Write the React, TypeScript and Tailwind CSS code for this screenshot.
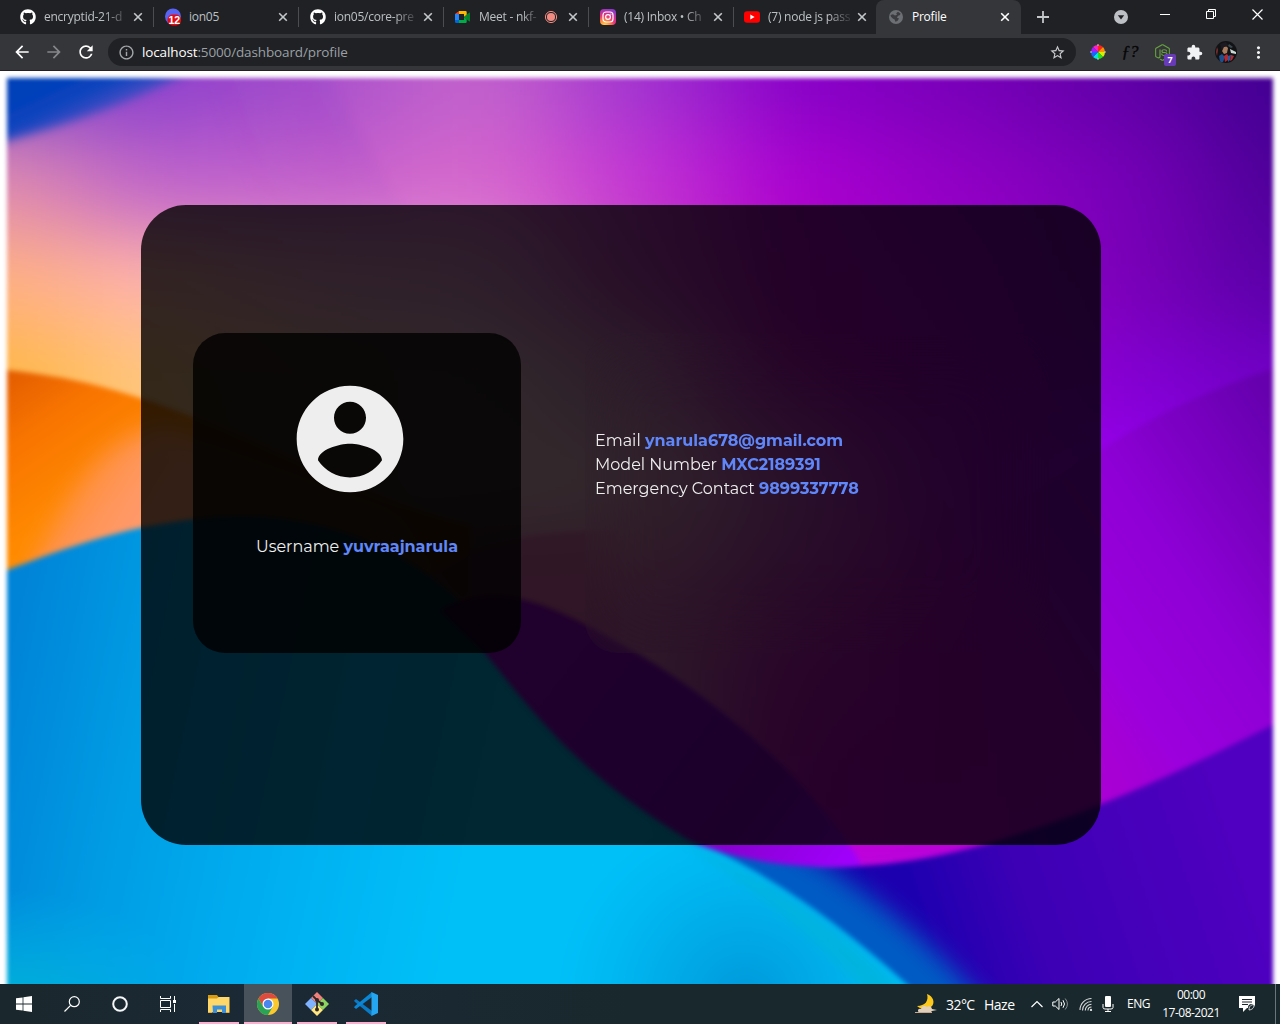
import type { ReactNode } from "react";
import { FaGithub, FaNodeJs } from "react-icons/fa";
import {
  MdArrowBack,
  MdArrowForward,
  MdExtension,
  MdMoreVert,
  MdOutlineInfo,
  MdRefresh,
  MdStarBorder,
} from "react-icons/md";

/* ---------- favicons ---------- */

const DiscordIcon = () => (
  <svg viewBox="0 0 16 16" className="h-4 w-4 overflow-visible">
    <circle cx="8" cy="7.5" r="8" fill="#5865f2" />
    <rect x="2.5" y="5.5" width="13.5" height="11" rx="5" fill="#e30b13" />
    <text x="9.3" y="14.6" textAnchor="middle" fontSize="10.5" fontWeight="700" fontFamily="Liberation Sans, sans-serif" fill="#fff">12</text>
  </svg>
);

const MeetIcon = () => (
  <svg viewBox="0 0 16 14" className="h-3.5 w-4">
    <path d="M0 4 4 1v3z" fill="#ea4335" />
    <path d="M4 1h6.5q1.2 0 1.2 1.2V6L9 7V4H4z" fill="#ffba00" />
    <path d="M0 4h4v6H0z" fill="#2684fc" />
    <path d="M0 10h4v3H1.2Q0 13 0 11.8z" fill="#0066da" />
    <path d="M4 10h5V7l2.7 2v2.8q0 1.2-1.2 1.2H4z" fill="#00ac47" />
    <path d="M9 7l5-4.2q1-.6 1 .5v7.4q0 1.1-1 .5z" fill="#00832d" />
    <path d="M11.7 4.8v4.4L9 7z" fill="#188038" />
  </svg>
);

const InstagramIcon = () => (
  <svg viewBox="0 0 16 16" className="h-4 w-4">
    <defs>
      <radialGradient id="ig" cx="0.28" cy="1.05" r="1.1">
        <stop offset="0" stopColor="#ffdd55" />
        <stop offset="0.3" stopColor="#ff8a3c" />
        <stop offset="0.6" stopColor="#e8307a" />
        <stop offset="1" stopColor="#8a3ac8" />
      </radialGradient>
    </defs>
    <rect width="16" height="16" rx="4" fill="url(#ig)" />
    <rect x="3" y="3" width="10" height="10" rx="3" fill="none" stroke="#fff" strokeWidth="1.2" />
    <circle cx="8" cy="8" r="2.4" fill="none" stroke="#fff" strokeWidth="1.2" />
    <circle cx="10.9" cy="5.1" r="0.7" fill="#fff" />
  </svg>
);

const YoutubeIcon = () => (
  <svg viewBox="0 0 16 16" className="h-4 w-4">
    <rect y="2.3" width="16" height="11.4" rx="3" fill="#f00" />
    <path d="M6.3 5.5v5l4.3-2.5z" fill="#fff" />
  </svg>
);

const GlobeIcon = () => (
  <svg viewBox="0 0 16 16" className="h-4 w-4">
    <circle cx="8" cy="8" r="7" fill="#6c6f74" />
    <path d="M2.500 6 5 5.200 7 6.500 9 5.800 8.200 4.200 10 2.800 12.500 4.500 12 6 10.200 6.800 8.800 8.600 11 9.600 9.400 12 7.400 12.800 6.600 10.400 4.800 9.600 3 7.800z" fill="#3b3c40" />
  </svg>
);

/* ---------- browser chrome ---------- */

type Tab = { title: string; icon: ReactNode; recording?: boolean };

const tabs: Tab[] = [
  { title: "encryptid-21-d", icon: <FaGithub size={16} className="text-white" /> },
  { title: "ion05", icon: <DiscordIcon /> },
  { title: "ion05/core-pre", icon: <FaGithub size={16} className="text-white" /> },
  { title: "Meet - nkf-", icon: <MeetIcon />, recording: true },
  { title: "(14) Inbox • Ch", icon: <InstagramIcon /> },
  { title: "(7) node js pass", icon: <YoutubeIcon /> },
];

const CloseMark = ({ className }: { className: string }) => (
  <svg viewBox="0 0 10 10" className={"h-[10px] w-[10px] shrink-0 " + className} fill="none" strokeWidth="1.6">
    <path d="M1.200 1.200l7.600 7.600M8.800 1.200l-7.600 7.600" />
  </svg>
);

function BrowserTab({ title, icon, recording, last }: Tab & { last: boolean }) {
  return (
    <div className={"flex h-full w-[145px] shrink-0 items-center pl-[11px] " + (last ? "-ml-px" : "")}>
      <span className="flex w-4 shrink-0 justify-center">{icon}</span>
      <span
        className={
          "ml-2 whitespace-nowrap text-[12px] tracking-[-0.25px] text-[#bcc0c4] " +
          (recording ? "w-[60px]" : "w-[84px]") +
          (title === "ion05" ? "" : " [mask-image:linear-gradient(to_right,#000_72%,#0003_96%)]")
        }
      >
        {title}
      </span>
      {recording && (
        <svg viewBox="0 0 14 14" className="ml-[5px] mr-[5px] h-[14px] w-[14px] shrink-0">
          <circle cx="7" cy="7" r="5.600" fill="none" stroke="#f28b82" />
          <circle cx="7" cy="7" r="4.100" fill="#f28b82" />
        </svg>
      )}
      <CloseMark className="ml-[5px] stroke-[#c4c7ca]" />
      {!last && <span className="ml-[10px] h-5 w-px shrink-0 bg-[#4b4d51]" />}
    </div>
  );
}

function TabStrip() {
  return (
    <div className="flex h-[34px] bg-[#202124] pl-[9px]">
      {tabs.map((t, i) => (
        <BrowserTab key={t.title} {...t} last={i === tabs.length - 1} />
      ))}
      <div className="-ml-[2px] flex h-full w-[145px] shrink-0 items-center rounded-t-lg bg-[#35363a] pl-[12px]">
        <GlobeIcon />
        <span className="ml-2 w-[88px] text-[12px] tracking-[-0.25px] text-white">Profile</span>
        <CloseMark className="stroke-white" />
      </div>
      <div className="flex flex-1 items-start">
        <svg viewBox="0 0 12 12" className="ml-[16px] mt-[11px] h-3 w-3" stroke="#c4c7ca" strokeWidth="1.800">
          <path d="M6 0v12M0 6h12" />
        </svg>
        <svg viewBox="0 0 14 14" className="ml-[65px] mt-[10px] h-[14px] w-[14px]">
          <circle cx="7" cy="7" r="7" fill="#bdc1c6" />
          <path d="M3.800 5.200h6.400L7 9.400z" fill="#202124" />
        </svg>
        <svg viewBox="0 0 108 14" className="ml-[30px] mt-[7px] h-[14px] w-[108px]" stroke="#fff" fill="none">
          <path d="M2 7.500h10" />
          <path d="M48.500 4.500h7v7h-7zM50.500 4v-1.500h7v7h-1.500" />
          <path d="M94.500 2.500l10 10M104.500 2.500l-10 10" strokeWidth="1.200" />
        </svg>
      </div>
    </div>
  );
}

const wheelSlices = [
  ["#ff2020", "M0 0 0-7A7 7 0 0 1 5-5z"],
  ["#ff20c0", "M0 0 0-7A7 7 0 0 0-5-5z"],
  ["#ff9000", "M0 0 5-5A7 7 0 0 1 7 0z"],
  ["#d8f000", "M0 0 7 0A7 7 0 0 1 5 5z"],
  ["#20e020", "M0 0 5 5A7 7 0 0 1 0 7z"],
  ["#00e8e0", "M0 0 0 7A7 7 0 0 1-5 5z"],
  ["#2060ff", "M0 0-5 5A7 7 0 0 1-7 0z"],
  ["#a020ff", "M0 0-7 0A7 7 0 0 1-5-5z"],
];

const Slot = ({ children }: { children: ReactNode }) => (
  <div className="relative flex h-8 w-8 shrink-0 items-center justify-center">{children}</div>
);

function Toolbar() {
  return (
    <div className="flex h-[37px] items-center border-b border-[#241f22] bg-[#35363a] pl-[6px]">
      <Slot><MdArrowBack size={20} className="text-white" /></Slot>
      <Slot><MdArrowForward size={20} className="text-[#85878a]" /></Slot>
      <Slot><MdRefresh size={20} className="text-white" /></Slot>
      <div className="ml-[6px] flex h-7 w-[968px] shrink-0 items-center rounded-full bg-[#202124] pl-[10px] pr-[10px]">
        <MdOutlineInfo size={17} className="text-[#a4a7ab]" />
        <span className="ml-[7px] flex-1 text-[13.500px] tracking-[-0.13px] text-[#9aa0a6]">
          <span className="text-white">localhost</span>:5000/dashboard/profile
        </span>
        <MdStarBorder size={17} className="text-[#c8cacd]" />
      </div>
      <div className="ml-[6px] flex">
        <Slot>
          <svg viewBox="-8 -8 16 16" className="h-4 w-4">
            {wheelSlices.map(([fill, d]) => <path key={fill} d={d} fill={fill} />)}
            <path d="M0-8v2M0 8v-2M-8 0h2M8 0h-2" stroke="#ccc" />
          </svg>
        </Slot>
        <Slot>
          <span className="font-['Liberation_Serif',serif] text-[17px] italic text-[#060607] [-webkit-text-stroke:0.4px_#060607]">ƒ?</span>
        </Slot>
        <Slot>
          <FaNodeJs size={17} className="text-[#67a23f]" />
          <span className="absolute bottom-[2px] right-[2px] h-3 w-3 rounded-[2px] bg-[#673ab7] text-center text-[9px] font-bold leading-3 text-white">7</span>
        </Slot>
        <Slot><MdExtension size={17} className="text-[#f1f3f4]" /></Slot>
        <Slot>
          <svg viewBox="0 0 22 22" className="h-[22px] w-[22px]">
            <clipPath id="avatar"><circle cx="11" cy="11" r="11" /></clipPath>
            <g clipPath="url(#avatar)">
              <path fill="#111214" d="M0 0h22v22H0z" />
              <path fill="#a87c5e" d="M8 6l3-1 2 2-1 5-3 1-2-3z" />
              <path fill="#1b1a20" d="M5 3l6-2 3 4-5 1-2 4z" />
              <path fill="#c9d8d4" d="M15 8l6 3v2l-5-1z" />
              <path fill="#1f4e8c" d="M4 15l3-2 3 3-2 5H5z" />
              <path fill="#b02a35" d="M9 15l3-2 2 3-1 3-3 2z" />
              <path fill="#245aa0" d="M13 15l3-1-1 5-2 2z" />
              <path fill="#b02a35" d="M16 14l3 1-2 4-2 1z" />
              <path fill="#7b3030" d="M2 6l1 3-1 6-1-4z" />
              <path fill="#3b4a50" d="M14 3l4 3-2 1-3-2z" />
            </g>
          </svg>
        </Slot>
        <Slot><MdMoreVert size={19} className="text-[#f1f3f4]" /></Slot>
      </div>
    </div>
  );
}

/* ---------- wallpaper ---------- */

const MESH_STEP_X = 160;
const MESH_STEP_Y = 100;
const mesh = [
  ["#7c4cc8", "#8c40cc", "#a850cc", "#c464cc", "#a034d0", "#8800c8", "#7800b8", "#6000a8", "#400090"],
  ["#e08cb0", "#bc60cc", "#c460cc", "#d868cc", "#c434d4", "#aa00d0", "#9000c4", "#7800b8", "#4c0098"],
  ["#ffb080", "#ffb4b0", "#eca4d0", "#e49cd8", "#c444c0", "#b000c8", "#9c00cc", "#7c00b8", "#5800a8"],
  ["#ffb640", "#ffc880", "#ffc8b0", "#f8ccd8", "#dc90d0", "#bc00c8", "#a400cc", "#8400d4", "#7000c4"],
  ["#ffb648", "#ffc880", "#ffd0b0", "#ffd4dc", "#f8c0d8", "#cc60d0", "#a800d8", "#9800f4", "#7c00d0"],
  ["#ffb648", "#ffc880", "#ffa0c0", "#f080c0", "#e880c4", "#c834c8", "#b400c8", "#a000d8", "#8000d0"],
  ["#ffb648", "#ffc880", "#ffa0c0", "#f090c0", "#e080c8", "#c810cc", "#b400cc", "#a000d8", "#8000d0"],
  ["#ffb648", "#ffc880", "#ffa0c0", "#ff90c8", "#e080c8", "#c400d0", "#b400cc", "#a800d8", "#8000d0"],
  ["#ffb648", "#ffc880", "#ffa0c0", "#ff90c8", "#e080c8", "#c000e0", "#b800dc", "#a800d8", "#8000d0"],
];

function Wallpaper() {
  return (
    <div className="absolute -bottom-5 left-[7px] right-[7px] top-[7px] overflow-hidden blur-[2px]">
      <svg viewBox="7 78 1266 926" preserveAspectRatio="none" className="block h-full w-full">
        <defs>
          <filter id="mesh" x="-300" y="-200" width="1900" height="1500" filterUnits="userSpaceOnUse" colorInterpolationFilters="sRGB">
            <feGaussianBlur stdDeviation="62 38" />
          </filter>
          <filter id="b2" x="-30%" y="-30%" width="160%" height="160%"><feGaussianBlur stdDeviation="1.500" /></filter>
          <filter id="b5" x="-30%" y="-30%" width="160%" height="160%"><feGaussianBlur stdDeviation="5" /></filter>
          <filter id="b12" x="-30%" y="-30%" width="160%" height="160%"><feGaussianBlur stdDeviation="12" /></filter>
          <linearGradient id="orange" gradientUnits="userSpaceOnUse" x1="0" y1="370" x2="110" y2="530">
            <stop offset="0" stopColor="#e05a00" />
            <stop offset="0.350" stopColor="#f87400" />
            <stop offset="0.800" stopColor="#ff8a00" />
            <stop offset="1" stopColor="#ff8c10" />
          </linearGradient>
          <linearGradient id="peach" gradientUnits="userSpaceOnUse" x1="55" y1="470" x2="130" y2="515">
            <stop offset="0" stopColor="#ff8c30" stopOpacity="0" />
            <stop offset="0.400" stopColor="#ff9250" />
            <stop offset="1" stopColor="#ff9c78" />
          </linearGradient>
          <linearGradient id="fold" gradientUnits="userSpaceOnUse" x1="240" y1="190" x2="375" y2="140">
            <stop offset="0" stopColor="#8c38c8" stopOpacity="0" />
            <stop offset="1" stopColor="#8c38c8" stopOpacity="0.200" />
          </linearGradient>
          <linearGradient id="foldFade" gradientUnits="userSpaceOnUse" x1="0" y1="120" x2="0" y2="225">
            <stop offset="0" stopColor="#fff" />
            <stop offset="1" stopColor="#000" />
          </linearGradient>
          <mask id="foldMask" maskUnits="userSpaceOnUse" x="100" y="40" width="400" height="260">
            <rect x="100" y="40" width="400" height="260" fill="url(#foldFade)" />
          </mask>
          <linearGradient id="magenta" gradientUnits="userSpaceOnUse" x1="1290" y1="430" x2="980" y2="640">
            <stop offset="0" stopColor="#6600ae" />
            <stop offset="0.450" stopColor="#8e00d6" />
            <stop offset="0.750" stopColor="#9c00dc" />
            <stop offset="1" stopColor="#b000cc" stopOpacity="0" />
          </linearGradient>
          <linearGradient id="cyan" gradientUnits="userSpaceOnUse" x1="0" y1="700" x2="480" y2="800">
            <stop offset="0" stopColor="#0084d8" />
            <stop offset="0.300" stopColor="#009ee4" />
            <stop offset="0.600" stopColor="#00aef0" />
            <stop offset="1" stopColor="#00c0f8" />
          </linearGradient>
          <linearGradient id="indigo" gradientUnits="userSpaceOnUse" x1="850" y1="960" x2="1240" y2="830">
            <stop offset="0" stopColor="#1400ac" />
            <stop offset="0.200" stopColor="#1e00b0" />
            <stop offset="0.450" stopColor="#3c00b4" />
            <stop offset="1" stopColor="#5000c0" />
          </linearGradient>
          <linearGradient id="lobe" gradientUnits="userSpaceOnUse" x1="560" y1="640" x2="850" y2="860">
            <stop offset="0" stopColor="#a000dc" />
            <stop offset="0.400" stopColor="#9000dc" />
            <stop offset="0.700" stopColor="#8800d0" />
            <stop offset="1" stopColor="#a000fc" />
          </linearGradient>
          <linearGradient id="corner" gradientUnits="userSpaceOnUse" x1="50" y1="78" x2="80" y2="144">
            <stop offset="0" stopColor="#003fb8" />
            <stop offset="0.400" stopColor="#0c44be" />
            <stop offset="1" stopColor="#7a54c8" />
          </linearGradient>
          <radialGradient id="deep" gradientUnits="userSpaceOnUse" cx="745" cy="1000" r="190">
            <stop offset="0" stopColor="#0090d4" stopOpacity="0.850" />
            <stop offset="0.450" stopColor="#009edc" stopOpacity="0.550" />
            <stop offset="1" stopColor="#00a8e8" stopOpacity="0" />
          </radialGradient>
          <radialGradient id="teal" gradientUnits="userSpaceOnUse" cx="0" cy="1010" r="200" gradientTransform="translate(0 404) scale(1 .6)">
            <stop offset="0" stopColor="#00b4d4" />
            <stop offset="1" stopColor="#00b4e8" stopOpacity="0" />
          </radialGradient>
        </defs>

        {/* soft colour field */}
        <g filter="url(#mesh)">
          {mesh.map((row, r) =>
            row.map((fill, c) => {
              const left = c === 0 ? -280 : (c - 0.5) * MESH_STEP_X;
              const right = c === row.length - 1 ? 1560 : (c + 0.5) * MESH_STEP_X;
              const top = r === 0 ? -120 : 30 + r * MESH_STEP_Y;
              const bottom = 130 + r * MESH_STEP_Y;
              return <rect key={`${r}-${c}`} x={left} y={top} width={right - left + 1} height={bottom - top + 1} fill={fill} />;
            }),
          )}
        </g>
        <g mask="url(#foldMask)">
          <path d="M318 50 350 120 420 240H180V50z" fill="url(#fold)" filter="url(#b5)" />
        </g>

        <path d="M-60 30H262Q130 118-60 156z" fill="url(#corner)" filter="url(#b5)" />

        {/* right-hand magenta sheet */}
        <path d="M1300 360C1220 385 1160 410 1101 450C1040 490 960 545 850 560V900H1300z" fill="url(#magenta)" filter="url(#b2)" />

        {/* orange sheet */}
        <path d="M-20 368C80 374 140 397 193 417C280 450 370 500 470 526V640H-20z" fill="url(#orange)" filter="url(#b2)" />
        <path d="M20 600C60 490 100 440 165 425L400 510 480 640z" fill="url(#peach)" opacity="0.850" filter="url(#b12)" />
        <path d="M380 640C420 560 480 530 620 530V640H500z" fill="#f060b8" opacity="0.550" filter="url(#b2)" />

        {/* indigo sheet */}
        <path d="M1300 711C1200 762 1130 795 1060 820C960 856 900 866 820 867L690 840V1030H1300z" fill="url(#indigo)" filter="url(#b2)" />
        <path d="M665 820Q850 890 975 1040" fill="none" stroke="#005cc4" strokeWidth="62" filter="url(#b12)" />

        {/* cyan sheet */}
        <path d="M-20 580C60 551 120 524 220 517C370 508 480 600 500 660C580 720 640 800 700 843C780 880 850 930 935 1010H-20z" fill="url(#cyan)" filter="url(#b2)" />
        <circle cx="745" cy="1000" r="190" fill="url(#deep)" clipPath="url(#cyanClip)" />
        <clipPath id="cyanClip">
          <path d="M500 760H600L700 843C780 880 850 930 935 1010H500z" />
        </clipPath>
        <path d="M640 820 700 850C780 888 850 938 925 1010H880Q790 900 640 820z" fill="#00b4dc" opacity="0.800" filter="url(#b5)" />
        <rect x="0" y="800" width="300" height="210" fill="url(#teal)" />

        {/* violet lobe */}
        <path d="M440 610C500 580 545 600 640 655C740 715 825 800 862 865C800 871 735 860 690 841C590 780 550 735 485 653z" fill="url(#lobe)" filter="url(#b2)" />
        <path d="M862 866C915 862 960 850 1010 836L850 838z" fill="#bc00dc" opacity="0.500" filter="url(#b2)" />
      </svg>
    </div>
  );
}

/* ---------- page ---------- */

const Strong = ({ children }: { children: ReactNode }) => (
  <span className="font-bold text-[#5f87fa]">{children}</span>
);

function ProfilePage() {
  return (
    <main className="relative h-[913px] overflow-hidden bg-white">
      <Wallpaper />
      <section className="relative ml-[141px] mt-[134px] flex h-[640px] w-[960px] items-start gap-16 rounded-[45px] bg-black/80 px-[52px] pt-[128px] font-['Montserrat','Inter',sans-serif] text-[16px] leading-6 text-[#eee]">
        <div className="flex h-80 w-[328px] shrink-0 flex-col items-center rounded-[32px] bg-black/80">
          <svg viewBox="0 0 24 24" className="mr-[14px] mt-[42px] h-32 w-32" fill="#eee">
            <path d="M12 2C6.480 2 2 6.480 2 12s4.480 10 10 10 10-4.480 10-10S17.520 2 12 2zm0 3c1.660 0 3 1.340 3 3s-1.340 3-3 3-3-1.340-3-3 1.340-3 3-3zm0 14.200c-2.500 0-4.710-1.280-6-3.220.030-1.990 4-3.080 6-3.080 1.990 0 5.970 1.090 6 3.080-1.290 1.940-3.500 3.220-6 3.220z" />
          </svg>
          <p className="mt-8 whitespace-nowrap">
            Username <Strong>yuvraajnarula</Strong>
          </p>
        </div>
        <div className="h-80 flex-1 rounded-[32px] pl-[10px] pt-24 backdrop-blur-[40px]">
          <p className="whitespace-nowrap">Email <Strong>ynarula678@gmail.com</Strong></p>
          <p className="whitespace-nowrap">Model Number <Strong>MXC2189391</Strong></p>
          <p className="whitespace-nowrap">Emergency Contact <Strong>9899337778</Strong></p>
        </div>
      </section>
    </main>
  );
}

/* ---------- taskbar ---------- */

const TaskButton = ({ children }: { children: ReactNode }) => (
  <div className="flex h-10 w-12 shrink-0 items-center justify-center">{children}</div>
);

const AppButton = ({ children, active }: { children: ReactNode; active?: boolean }) => (
  <div className={"relative mr-px flex h-10 w-12 shrink-0 items-center justify-center " + (active ? "bg-[#48525a]" : "")}>
    {children}
    <span className={"absolute bottom-0 h-[2px] bg-[#fbb0cf] " + (active ? "w-12" : "w-10")} />
  </div>
);

function Taskbar() {
  return (
    <footer className="flex h-10 items-center bg-[#1a272c] bg-linear-to-r from-[#1a272c] via-[#1b2936] via-20% to-[#19282c] to-50% text-white">
      <TaskButton>
        <svg viewBox="0 0 16 16" className="h-4 w-4" fill="#fff">
          <path d="M0 2.300 6.600 1.400v6.200H0zM7.400 1.300 16 0v7.600H7.400zM0 8.400h6.600v6.200L0 13.700zM7.400 8.400H16V16l-8.600-1.300z" />
        </svg>
      </TaskButton>
      <TaskButton>
        <svg viewBox="0 0 16 16" className="h-4 w-4" fill="none" stroke="#fff" strokeWidth="1.200">
          <circle cx="10.300" cy="5.700" r="5" />
          <path d="M6.600 9.400 0.500 15.500" />
        </svg>
      </TaskButton>
      <TaskButton>
        <svg viewBox="0 0 16 16" className="h-4 w-4" fill="none" stroke="#f4f6f7" strokeWidth="2">
          <circle cx="8" cy="8" r="6.800" />
        </svg>
      </TaskButton>
      <TaskButton>
        <svg viewBox="0 0 16 16" className="h-4 w-4" fill="none" stroke="#fff">
          <path d="M.5 4.500h10v7H.5zM.5 0v2.500h10V0M.5 16v-2.500h10V16M14.500 0v4M14.500 8v8" />
          <path d="M13 4h3v3h-3z" fill="#fff" stroke="none" />
        </svg>
      </TaskButton>
      <div className="ml-[3px] flex">
        <AppButton>
          <svg viewBox="0 0 22 18" className="h-[18px] w-[22px]">
            <path d="M0 0h9l1.500 2v3H0z" fill="#d89a10" />
            <path d="M0 3.500h9L10.500 2H21.500v15H0z" fill="#fed76a" />
            <path d="M4.500 10.500h13.500V18h-4v-3.500h-5V18h-4z" fill="#3a8fd8" />
            <path d="M0 17h4.500v1H0zM18 17h3.500v1H18z" fill="#e8b03a" />
          </svg>
        </AppButton>
        <AppButton active>
          <svg viewBox="-12 -12 24 24" className="h-6 w-6">
            <circle r="11" fill="#fbc92e" />
            <path d="M-9.530-5.500A11 11 0 0 1 9.530-5.500H0L-4.760 2.750z" fill="#dd4b3e" />
            <path d="M-9.530-5.500A11 11 0 0 0 0 11L4.760 2.750-4.760 2.750z" fill="#2aa354" />
            <circle r="5.500" fill="#fff" />
            <circle r="4.300" fill="#4a86ee" />
          </svg>
        </AppButton>
        <AppButton>
          <svg viewBox="-12 -12 24 24" className="h-6 w-6">
            <path d="M0-12 6-6 0 0-6-6z" fill="#f0807c" />
            <path d="M-12 0-6-6 0 0-6 6z" fill="#80b3ff" />
            <path d="M12 0 6 6 0 0 6-6z" fill="#8dd35f" />
            <path d="M0 12 6 6 0 0-6 6z" fill="#ffe680" />
            <path d="M-4-8 0-4v9M0-4 5 0" stroke="#2f2829" strokeWidth="1.800" fill="none" />
            <circle cy="-4" r="2" fill="#2f2829" />
            <circle cy="5.500" r="2" fill="#2f2829" />
            <circle cx="5" cy="0" r="2" fill="#2f2829" />
          </svg>
        </AppButton>
        <AppButton>
          <svg viewBox="0 0 24 24" className="h-6 w-6">
            <path d="M0 8.800 2 7.100 18 19v5L1 10z" fill="#0a7ac4" />
            <path d="M0 15.200 2 17 18 5V0L1 14z" fill="#0a86d4" />
            <path d="M17.500 0 24 3v18l-6.500 3z" fill="#25a5f0" />
          </svg>
        </AppButton>
      </div>

      <div className="ml-auto flex h-full items-center">
        <svg viewBox="0 0 22 20" className="h-5 w-[22px]">
          <path d="M12 0c6 2 9 9 4 13-3 2-10 3-14-1 8 0 12-5 10-12z" fill="#fcc81c" />
          <path d="M3 17a2 2 0 0 1 3-2 3.500 3.500 0 0 1 6-2 3 3 0 0 1 5 2l5 1-5 1-2 2-5-1-6 1z" fill="#e3d0ba" />
          <path d="M0 18.500h17" stroke="#c9a98c" />
        </svg>
        <span className="ml-[9px] w-[38px] whitespace-nowrap text-[14px] tracking-[-0.55px]">32°C</span>
        <span className="w-[47px] text-[14px] tracking-[-0.5px]">Haze</span>
        <svg viewBox="0 0 12 8" className="h-2 w-3" fill="none" stroke="#fff" strokeWidth="1.200"><path d="M.5 7 6 1.500 11.500 7" /></svg>
        <svg viewBox="0 0 18 14" className="ml-[9px] h-[14px] w-[18px]" fill="none" stroke="#fff">
          <path d="M.8 5v4h2.500L7 12.500v-11L3.300 5z" />
          <path d="M9 5q1.500 2 0 4M11 3.200q3 3.800 0 7.600" />
          <path d="M13.200 1.500q4.500 5.500 0 11" stroke="#899195" />
        </svg>
        <svg viewBox="0 0 14 14" className="ml-[9px] h-[14px] w-[14px]" fill="none" stroke="#d7dadb" strokeWidth="1.100">
          <path d="M1 13A11.500 11.500 0 0 1 12.500 1.500M3.500 13.500A9 9 0 0 1 12.500 4.500M6.300 13.500A6.300 6.300 0 0 1 12.500 7.300M9 13.500A3.500 3.500 0 0 1 12.500 10" />
          <circle cx="12" cy="13" r="0.600" fill="#fff" />
        </svg>
        <svg viewBox="0 0 12 16" className="ml-[9px] h-4 w-3" fill="none" stroke="#fff">
          <rect x="3" y="0" width="6" height="11" rx="1" fill="#fff" stroke="none" />
          <path d="M1 8v3.500q0 1.500 2 1.500h6q2 0 2-1.500V8M6 13v2.500M3 15.500h6" />
        </svg>
        <span className="ml-[13px] w-[26px] text-[12px] tracking-[-0.5px]">ENG</span>
        <div className="ml-[5px] mr-px w-[66px] text-center text-[12px] leading-[18px] tracking-[-0.5px]">
          <div>00:00</div>
          <div>17-08-2021</div>
        </div>
        <svg viewBox="0 0 16 16" className="ml-[14px] h-4 w-4">
          <path d="M0 0h16v12h-8l-4 4v-4H0z" fill="#fff" />
          <path d="M3 3.500h10M3 6h10M3 8.500h6" stroke="#1a272c" />
          <circle cx="12.500" cy="11.500" r="3.500" fill="#1a272c" />
          <path d="M10 14c0-3 1-5 5-5.500 0 3-1 5-5 5.500z" fill="none" stroke="#fff" strokeWidth="0.800" />
        </svg>
        <span className="ml-[20px] mr-[4px] h-full w-px bg-[#69767b]" />
      </div>
    </footer>
  );
}

export default function App() {
  return (
    <div className="flex h-[1024px] w-[1280px] flex-col overflow-hidden bg-white font-['Open_Sans','Noto_Sans',sans-serif]">
      <TabStrip />
      <Toolbar />
      <ProfilePage />
      <Taskbar />
    </div>
  );
}
